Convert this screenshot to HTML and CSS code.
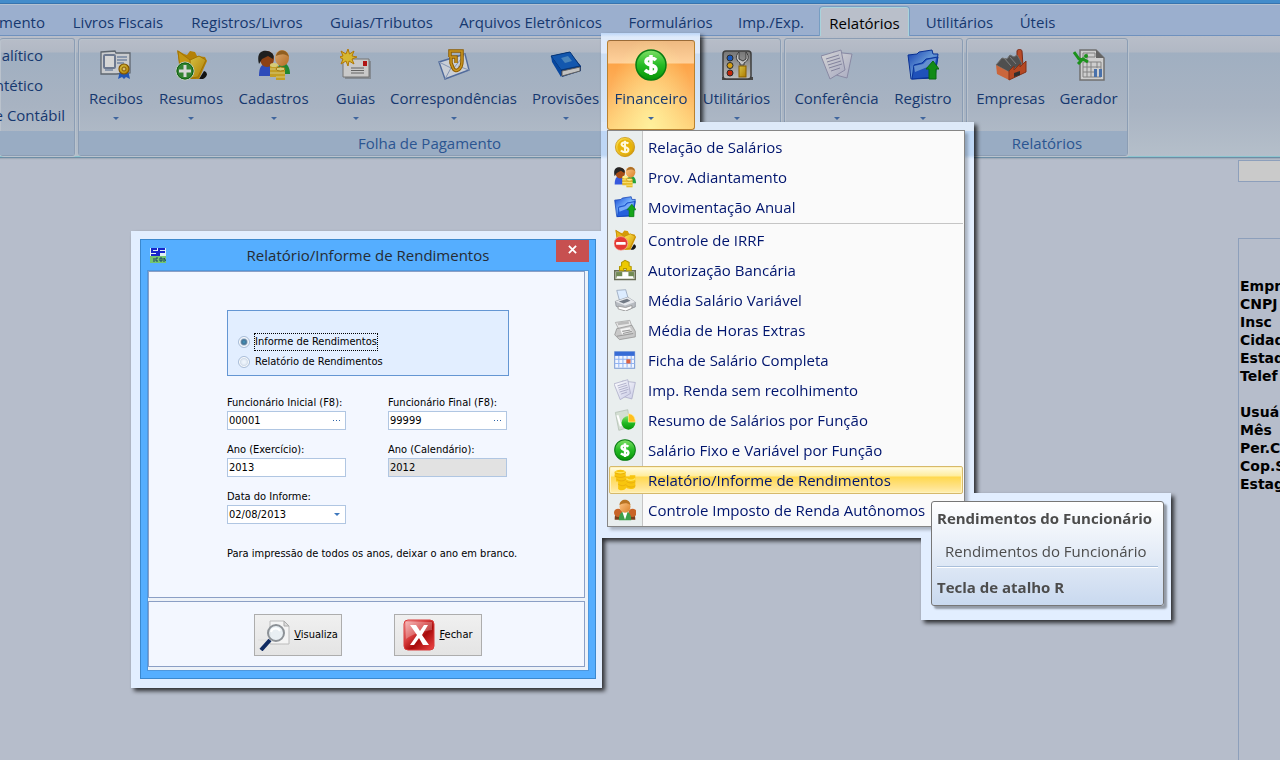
FILE: index.html
```html
<!DOCTYPE html>
<html lang="pt-BR">
<head>
<meta charset="utf-8">
<meta name="viewport" content="width=device-width, initial-scale=1">
<title>Relatório/Informe de Rendimentos</title>
<link rel="stylesheet" href="styles.css">
</head>
<body>
<svg class="sprite" aria-hidden="true">
  <defs>
    <linearGradient id="gGold" x1="0" y1="0" x2="1" y2="1"><stop offset="0" stop-color="#ffe650"/><stop offset="1" stop-color="#cf9200"/></linearGradient>
    <linearGradient id="gGreen" x1="0" y1="0" x2="0" y2="1"><stop offset="0" stop-color="#7fe066"/><stop offset=".5" stop-color="#25bb25"/><stop offset="1" stop-color="#079407"/></linearGradient>
    <linearGradient id="gBlue" x1="0" y1="0" x2="1" y2="1"><stop offset="0" stop-color="#1648d0"/><stop offset=".5" stop-color="#78b4ff"/><stop offset="1" stop-color="#0b3cb4"/></linearGradient>
    <linearGradient id="gPaper" x1="0" y1="0" x2="1" y2="1"><stop offset="0" stop-color="#ffffff"/><stop offset="1" stop-color="#c9cbe6"/></linearGradient>
    <linearGradient id="gSkin" x1="0" y1="0" x2="1" y2="1"><stop offset="0" stop-color="#ffc98a"/><stop offset="1" stop-color="#d98028"/></linearGradient>
    <linearGradient id="gRed" x1="0" y1="0" x2="1" y2="1"><stop offset="0" stop-color="#f6b0b0"/><stop offset=".4" stop-color="#d53a3a"/><stop offset=".6" stop-color="#a80c0c"/><stop offset="1" stop-color="#f04848"/></linearGradient>
    <linearGradient id="gGray" x1="0" y1="0" x2="0" y2="1"><stop offset="0" stop-color="#8b8b8b"/><stop offset="1" stop-color="#e2e2e2"/></linearGradient>
  </defs>
  <symbol id="cert" viewBox="0 0 32 32"><path d="M1 3l14-1 1 2h14v20l-14 1H1z" fill="#eff2f5" stroke="#707984" stroke-width="1.3"/><rect x="4" y="6" width="11" height="13" rx="1" fill="#fff" stroke="#8290ab" stroke-width="2"/><path d="M17 8h10M17 11h10M17 14h7M5 21h8" stroke="#8ba0c0" stroke-width="1.4"/><path d="M20 22l-2 8 4-2 2 2 2-2 4 2-2-9z" fill="#2866d8"/><circle cx="24" cy="20" r="5" fill="url(#gGold)" stroke="#9a6400" stroke-width="1.2"/><circle cx="24" cy="20" r="2" fill="#ffe58a" stroke="#a06b08"/></symbol>
  <symbol id="folderbase" viewBox="0 0 32 32"><path d="M24 30l5-8c4 1 4 6-1 8z" fill="#151515"/><path d="M2 1l7 4 3 1 3-4 5 1 2 4 8 1 2 4-8 18H7z" fill="#d69a08"/><path d="M3 2l12 9 9-3-3 21H6z" fill="#e9b417" stroke="#c08a05"/><path d="M15 11l9-4 7 4-8 17-7 1z" fill="url(#gGold)" stroke="#c08a05"/></symbol>
  <symbol id="resumos" viewBox="0 0 32 32"><use href="#folderbase"/><circle cx="10" cy="22" r="9" fill="#3d9c3a" stroke="#e5f2e2"/><circle cx="10" cy="22" r="8" fill="none" stroke="#137619"/><path d="M10 16v12M4 22h12" stroke="#fff" stroke-width="3"/></symbol>
  <symbol id="controle" viewBox="0 0 32 32"><use href="#folderbase"/><circle cx="10" cy="21" r="10" fill="#e43a35" stroke="#f6aaa0"/><rect x="3" y="19" width="14" height="4" rx="1" fill="#fff"/></symbol>
  <symbol id="people" viewBox="0 0 32 32"><path d="M1 27c0-8 2-12 7-12s8 4 8 12z" fill="#3659dd"/><path d="M19 25c0-8 3-11 6-11s7 3 7 11z" fill="#25a13a"/><ellipse cx="9" cy="10" rx="7" ry="8" fill="#a74d18"/><path d="M1 15C-2 4 4 1 9 2s8 4 6 8l-5-3-6 3z" fill="#252525"/><ellipse cx="24" cy="9" rx="7" ry="8" fill="url(#gSkin)"/><path d="M18 7c1-7 11-8 13 1-4-4-8-3-13-1z" fill="#ac7027"/><path d="M12 16h8v12h-8z" fill="#e7bc2c"/><path d="M12 20h8M12 24h8" stroke="#fff091"/><ellipse cx="16" cy="16" rx="4" ry="2" fill="#fff18d"/><path d="M18 20h9v11h-9z" fill="#e7bc2c"/><path d="M18 24h9M18 28h9" stroke="#fff091"/><ellipse cx="22.500" cy="20" rx="4.500" ry="2" fill="#fff18d" stroke="#bd8d12"/></symbol>
  <symbol id="guias" viewBox="0 0 32 32"><path d="M5 12h26v18H5z" fill="#777" opacity=".5"/><path d="M3 10h26v18H3z" fill="#efefef" stroke="#8a8a8a"/><path d="M11 19h13M11 21.500h13M11 24h13" stroke="#777"/><path d="M23 12h4v5h-4z" fill="#d11818"/><path d="M8 0l1.500 5L14 2l-2 5 5 1-5 2 2 5-5-3-1 5-2-5-5 3 2-5-4-2 4-1-2-5 5 3z" fill="#ffda3a" stroke="#d38e05"/></symbol>
  <symbol id="corr" viewBox="0 0 32 32"><path d="M1 13L27 5l4 16L7 30z" fill="#f1f6ff" stroke="#607fb9" stroke-width="1.400"/><path d="M1 13l14 7L27 5M7 30l6-11M31 21l-11-4" fill="none" stroke="#9bb1d6"/><path d="M12 8V2h12v10c0 9-7 12-9 7l-2-5V8h5v6" fill="none" stroke="#a86d00" stroke-width="3.500"/><path d="M12 8V2h12v10c0 9-7 12-9 7l-2-5V8h5v6" fill="none" stroke="#efb226" stroke-width="1.500"/></symbol>
  <symbol id="book" viewBox="0 0 32 32"><path d="M1 7L19 3l12 14v5L12 28z" fill="#063990"/><path d="M12 27l18-5v-4l-18 4z" fill="#e7e7e7" stroke="#737373"/><path d="M1 7L20 3l10 14-19 4z" fill="#1767cf" stroke="#08408c"/><path d="M11 9l7-2 4 5-7 2z" fill="#579ddf"/><path d="M1 7l10 14v7L2 13z" fill="#0a55bd"/></symbol>
  <symbol id="dollar" viewBox="0 0 32 32"><circle cx="16" cy="16" r="15" fill="url(#gGreen)" stroke="#087d12" stroke-width="1.500"/><path d="M21 11c-2-2-9-3-10 1-1 5 10 3 10 8s-8 4-11 1M16 6v20" fill="none" stroke="#fff" stroke-width="3.500"/></symbol>
  <symbol id="coin" viewBox="0 0 32 32"><circle cx="16" cy="16" r="14" fill="url(#gGold)" stroke="#c88e00"/><circle cx="16" cy="16" r="11" fill="#e8b408"/><path d="M21 11c-2-2-9-3-10 1s10 3 10 8-8 4-11 1M16 7v18" fill="none" stroke="#fff8da" stroke-width="3"/></symbol>
  <symbol id="tools" viewBox="0 0 32 32"><rect x="1" y="28" width="31" height="3" fill="#555"/><rect x="2" y="2" width="28" height="28" rx="3" fill="url(#gGray)" stroke="#4a4a4a" stroke-width="1.500"/><circle cx="9" cy="9" r="3" fill="#1d69e0" stroke="#333"/><circle cx="9" cy="16.500" r="3" fill="#ffbc12" stroke="#333"/><circle cx="9" cy="24" r="3" fill="#e62d0c" stroke="#333"/><path d="M18 3c-5 5-2 9 1 11v2h4v-2c4-2 6-6 2-11v7l-3 2-4-2z" fill="#e7e7e7" stroke="#484848"/><rect x="18" y="17" width="7" height="11" fill="url(#gGold)" stroke="#a06f00"/></symbol>
  <symbol id="papers" viewBox="0 0 32 32"><path d="M12 3l19 2-5 24-18-5z" fill="url(#gPaper)" stroke="#a3a3c2"/><path d="M0 7L20 1l4 20-15 9z" fill="url(#gPaper)" stroke="#a3a3c2"/><path d="M5 10l13-4M6 13l13-4M7 16l13-4M8 19l13-4M10 22l9-3" stroke="#9b9bba"/></symbol>
  <symbol id="bluefolder" viewBox="0 0 32 32"><path d="M1 6l9-1 2-2 13-2 1 4h5l-3 24-24 1z" fill="url(#gBlue)" stroke="#0a39ae"/><path d="M7 16l8-2 4-4 12-2-4 20-22 2z" fill="#2560dd" stroke="#0c3eb7"/><path d="M7 17l9-2 4-4 9-2-1 6-20 8z" fill="#91c3ff" opacity=".75"/><path d="M26 12l6 8h-3v10h-7V20h-3z" fill="#15a51a" stroke="#0b7d10"/></symbol>
  <symbol id="factory" viewBox="0 0 32 32"><path d="M22 2c0-2 5-2 5 0l1 15h-6z" fill="#dc5930" stroke="#8e321a"/><path d="M1 16l6-7 5 1 3-4 4 2 3-2 3 5 2 4-13 8z" fill="#5e5e5e" stroke="#808080"/><path d="M9 9l7 8M15 8l6 7" stroke="#9a9a9a"/><path d="M1 16l13 7v8L2 25z" fill="#f07a48"/><path d="M14 22l5-5v4l6-6v3l6-6v11l-17 8z" fill="#d85628" stroke="#9d3b1c"/><path d="M19 24l6-2v4l-6 2z" fill="#393939"/></symbol>
  <symbol id="sheet" viewBox="0 0 32 32"><path d="M7 1h16l8 8v22H7z" fill="#f5f5f5" stroke="#858585" stroke-width="1.500"/><path d="M23 1v8h8z" fill="#777"/><path d="M10 4h12v4H10zM10 13h18v15H10zM10 18h18M10 23h11M14 4v24M18 13v15M24 13v6" fill="none" stroke="#9b9b9b"/><path d="M21 20h3v8h-3zM26 20h3v8h-3z" fill="#5786cc"/><path d="M1 3l5 7 4 1M5 15l5-5 5 3" fill="none" stroke="#20ae20" stroke-width="3"/><circle cx="13" cy="7" r="2" fill="#20ae20"/></symbol>
  <symbol id="bank" viewBox="0 0 32 32"><path d="M1 17h30v13H1z" fill="#cbd0bd" stroke="#686d57" stroke-width="2"/><path d="M3 19h26v8H3z" fill="#708a54"/><path d="M4 25h24v3H4z" fill="#fff"/><path d="M12 19h9v7h-9z" fill="#fff"/><path d="M8 17v-6l3-1V5l5-3 6 3v5l3 1v6h-7v-3h-4v3z" fill="#edc900" stroke="#b29800" stroke-width="1.500"/></symbol>
  <symbol id="printer" viewBox="0 0 32 32"><path d="M4 2l13-1 4 14-13 2z" fill="#dcecff" stroke="#8797b1"/><path d="M2 18l18-6 11 7v7l-15 6L3 25z" fill="#b8bcc2" stroke="#848990"/><path d="M2 18l18-6 11 7-15 5z" fill="#e7e9ed"/><path d="M7 18l12-4 5 3-10 4z" fill="#737b86"/><path d="M6 25l11 2 9-3v4l-9 4-11-3z" fill="#fff" stroke="#888"/></symbol>
  <symbol id="register" viewBox="0 0 32 32"><path d="M2 5l21-3 3 9-19 4z" fill="#e8e8e8" stroke="#999"/><path d="M5 5l16-2 1 4-16 2z" fill="#bbb"/><path d="M4 14l22-5 5 9v8l-23 4-7-7z" fill="#c8c8c8" stroke="#8b8b8b"/><path d="M9 15l14-3 4 7-15 4z" fill="#f4f4f4"/><path d="M12 18l12-2M13 21l13-3M4 25l24-4" stroke="#999" stroke-width="1.500"/></symbol>
  <symbol id="calendar" viewBox="0 0 32 32"><rect x="1" y="4" width="29" height="24" fill="#f1f5ff" stroke="#7b9bd5" stroke-width="1.500"/><rect x="1" y="4" width="29" height="6" fill="#376cd6"/><path d="M7 10v17M13 10v17M19 10v17M25 10v17M1 15h29M1 21h29" stroke="#91b4f3" stroke-width="1.500"/><rect x="18" y="15" width="6" height="6" fill="#df6342"/></symbol>
  <symbol id="pie" viewBox="0 0 32 32"><path d="M2 5l18-4 4 25-17 5z" fill="#d4dfd3" stroke="#aebbad"/><path d="M5 9l5 16" stroke="#fff" stroke-width="3"/><circle cx="21" cy="20" r="10" fill="url(#gGreen)"/><path d="M21 19V7c7 0 10 6 10 12z" fill="#ffbf1f" stroke="#fff2a0"/></symbol>
  <symbol id="coins" viewBox="0 0 32 32"><path d="M1 4c3-4 14-4 16 0v7h6v-2h8v17c-2 4-11 4-13 1-1 4-9 5-12 2V18H3V12H1z" fill="#f8c50e"/><path d="M1 5c4 3 12 3 16 0M1 10c4 3 12 3 16 0M4 15c4 3 10 3 13 0M6 22c4 3 9 3 12 0M18 18c4 3 10 3 13 0M18 24c4 3 10 3 13 0" fill="none" stroke="#e2a50c"/><path d="M2 4c4 2 11 2 14 0M18 14c4 3 9 3 13 0" fill="none" stroke="#ffe557" stroke-width="2"/></symbol>
  <symbol id="team" viewBox="0 0 32 32"><path d="M1 30c0-8 2-12 7-12v12zM31 30c0-8-2-12-7-12v12z" fill="#7b3f1c"/><circle cx="6" cy="20" r="6" fill="#c86427"/><circle cx="27" cy="20" r="6" fill="#c86427"/><path d="M7 31c0-9 3-13 9-13s9 4 9 13z" fill="#3d9f4a"/><path d="M12 18h8l-4 12z" fill="#fff"/><ellipse cx="16" cy="11" rx="8" ry="9" fill="url(#gSkin)"/><path d="M8 9c0-10 15-11 16 0-5-4-11-3-16 0z" fill="#b87424"/></symbol>
</svg>

<div class="app">
  <div class="titlestrip"></div>
  <nav class="tabs" aria-label="Menu principal">
    <a class="tab tab-cut" href="#">mento</a>
    <a class="tab" href="#">Livros Fiscais</a>
    <a class="tab" href="#">Registros/Livros</a>
    <a class="tab" href="#">Guias/Tributos</a>
    <a class="tab" href="#">Arquivos Eletrônicos</a>
    <a class="tab" href="#">Formulários</a>
    <a class="tab" href="#">Imp./Exp.</a>
    <a class="tab tab-active" href="#" aria-current="page">Relatórios</a>
    <a class="tab" href="#">Utilitários</a>
    <a class="tab" href="#">Úteis</a>
  </nav>

  <div class="ribbon">
    <section class="group group-left">
      <div class="group-list">
        <button class="textbtn textbtn-in">alítico</button>
        <button class="textbtn textbtn-in">ntético</button>
        <button class="textbtn">e Contábil</button>
      </div>
      <div class="group-label"></div>
    </section>
    <section class="group">
      <div class="group-body body-folha">
        <button class="big"><svg><use href="#cert"/></svg><span>Recibos</span><i class="caret"></i></button>
        <button class="big"><svg><use href="#resumos"/></svg><span>Resumos</span><i class="caret"></i></button>
        <button class="big"><svg><use href="#people"/></svg><span>Cadastros</span><i class="caret"></i></button>
        <button class="big big-guias"><svg><use href="#guias"/></svg><span>Guias</span><i class="caret"></i></button>
        <button class="big"><svg><use href="#corr"/></svg><span>Correspondências</span><i class="caret"></i></button>
        <button class="big"><svg><use href="#book"/></svg><span>Provisões</span><i class="caret"></i></button>
        <button class="big big-open" aria-expanded="true"><svg><use href="#dollar"/></svg><span>Financeiro</span><i class="caret"></i></button>
        <button class="big"><svg><use href="#tools"/></svg><span>Utilitários</span><i class="caret"></i></button>
      </div>
      <div class="group-label">Folha de Pagamento</div>
    </section>
    <section class="group">
      <div class="group-body body-conf">
        <button class="big"><svg><use href="#papers"/></svg><span>Conferência</span><i class="caret"></i></button>
        <button class="big"><svg><use href="#bluefolder"/></svg><span>Registro</span><i class="caret"></i></button>
      </div>
      <div class="group-label"></div>
    </section>
    <section class="group">
      <div class="group-body body-rel">
        <button class="big"><svg><use href="#factory"/></svg><span>Empresas</span></button>
        <button class="big"><svg><use href="#sheet"/></svg><span>Gerador</span></button>
      </div>
      <div class="group-label">Relatórios</div>
    </section>
  </div>

  <main class="workspace">
    <aside class="side">
      <input class="side-input" type="text" aria-label="Busca">
      <div class="side-box">
        <p>Empr</p><p>CNPJ</p><p>Insc</p><p>Cidad</p><p>Estad</p><p>Telef</p>
        <p class="side-gap">Usuá</p><p>Mês</p><p>Per.C</p><p>Cop.S</p><p>Estag</p>
      </div>
    </aside>
  </main>
</div>

<div class="overlays">
  <div class="halo halo-button"></div>
  <div class="halo halo-dialog">
    <section class="window" role="dialog" aria-labelledby="dlg-title">
      <header class="window-head">
        <svg class="window-logo" viewBox="0 0 16 16" aria-hidden="true"><rect y="1" width="16" height="15" fill="#dff0f4"/><rect y="9" width="16" height="7" fill="#74c66c"/><path d="M7 2H2v3h5v3H1M15 2H9v7M9 5h6" fill="none" stroke="#1726c9" stroke-width="2"/><path d="M4 11v4M8 11H6v3h2M10 11h2v3h-2zM14 15v-4l2 3" fill="none" stroke="#18406a"/></svg>
        <h1 id="dlg-title">Relatório/Informe de Rendimentos</h1>
        <button class="close" aria-label="Fechar janela"><svg viewBox="0 0 10 10"><path d="M1 1l8 8M9 1l-8 8" stroke="#fff" stroke-width="2"/></svg></button>
      </header>
      <div class="window-body">
        <form class="pane pane-form">
          <fieldset class="choices">
            <label><input type="radio" name="tipo" checked><span class="focused">Informe de Rendimentos</span></label>
            <label><input type="radio" name="tipo"><span>Relatório de Rendimentos</span></label>
          </fieldset>
          <div class="fields">
            <div class="field"><label for="f1">Funcionário Inicial (F8):</label><div class="box"><input id="f1" type="text" value="00001"><button type="button" class="dots" aria-label="Procurar funcionário inicial"><i></i><i></i><i></i></button></div></div>
            <div class="field"><label for="f2">Funcionário Final (F8):</label><div class="box"><input id="f2" type="text" value="99999"><button type="button" class="dots" aria-label="Procurar funcionário final"><i></i><i></i><i></i></button></div></div>
            <div class="field"><label for="f3">Ano (Exercício):</label><div class="box"><input id="f3" type="text" value="2013"></div></div>
            <div class="field"><label for="f4">Ano (Calendário):</label><div class="box box-off"><input id="f4" type="text" value="2012" readonly></div></div>
            <div class="field"><label for="f5">Data do Informe:</label><div class="box"><select id="f5"><option>02/08/2013</option></select><i class="caret"></i></div></div>
          </div>
          <p class="note">Para impressão de todos os anos, deixar o ano em branco.</p>
        </form>
        <div class="pane pane-actions">
          <button class="action"><svg viewBox="0 0 32 32"><path d="M12 2h14l5 5v18H12z" fill="#f4f4f4" stroke="#bcbcbc"/><path d="M26 2v5h5z" fill="#ddd" stroke="#aaa"/><path d="M0 21h12" stroke="#ddd"/><path d="M12 21L3 31" stroke="#102c63" stroke-width="4"/><circle cx="18" cy="14" r="8" fill="#e6edf2" fill-opacity=".8" stroke="#8c9196" stroke-width="2"/><path d="M13 13c1-4 7-5 9-1" fill="none" stroke="#fff" stroke-width="2"/></svg><span><u>V</u>isualiza</span></button>
          <button class="action"><svg viewBox="0 0 32 32"><rect x="1" y="1" width="30" height="30" rx="4" fill="url(#gRed)" stroke="#d83b3b"/><path d="M3 3h26v8C20 12 9 15 3 20z" fill="#fff" opacity=".25"/><path d="M7 6h6l4 6 4-6h4l-6 10 7 10h-6l-4-7-5 7H7l7-10z" fill="#fff"/></svg><span><u>F</u>echar</span></button>
        </div>
      </div>
    </section>
  </div>
  <div class="halo halo-tip"></div>
  <div class="halo halo-menu">
    <ul class="menu" role="menu">
      <li><button class="item" role="menuitem"><svg><use href="#coin"/></svg>Relação de Salários</button></li>
      <li><button class="item" role="menuitem"><svg><use href="#people"/></svg>Prov. Adiantamento</button></li>
      <li><button class="item" role="menuitem"><svg><use href="#bluefolder"/></svg>Movimentação Anual</button></li>
      <li class="sep" role="separator"></li>
      <li><button class="item" role="menuitem"><svg><use href="#controle"/></svg>Controle de IRRF</button></li>
      <li><button class="item" role="menuitem"><svg><use href="#bank"/></svg>Autorização Bancária</button></li>
      <li><button class="item" role="menuitem"><svg><use href="#printer"/></svg>Média Salário Variável</button></li>
      <li><button class="item" role="menuitem"><svg><use href="#register"/></svg>Média de Horas Extras</button></li>
      <li><button class="item" role="menuitem"><svg><use href="#calendar"/></svg>Ficha de Salário Completa</button></li>
      <li><button class="item" role="menuitem"><svg><use href="#papers"/></svg>Imp. Renda sem recolhimento</button></li>
      <li><button class="item" role="menuitem"><svg><use href="#pie"/></svg>Resumo de Salários por Função</button></li>
      <li><button class="item" role="menuitem"><svg><use href="#dollar"/></svg>Salário Fixo e Variável por Função</button></li>
      <li><button class="item item-hot" role="menuitem"><svg><use href="#coins"/></svg>Relatório/Informe de Rendimentos</button></li>
      <li><button class="item" role="menuitem"><svg><use href="#team"/></svg>Controle Imposto de Renda Autônomos</button></li>
    </ul>
  </div>
  <div class="tip" role="tooltip">
    <strong>Rendimentos do Funcionário</strong>
    <p>Rendimentos do Funcionário</p>
    <strong class="tip-foot">Tecla de atalho R</strong>
  </div>
</div>
</body>
</html>
```
FILE: styles.css
```css
* { box-sizing: border-box; }

body {
  margin: 0;
  background: #b6bdcb;
  font-family: "Open Sans", "Noto Sans", sans-serif;
  font-size: 15px;
  line-height: 20px;
  color: #16386f;
  overflow: hidden;
}

button, input, select { font: inherit; color: inherit; }
button { border: 0; background: none; padding: 0; }
p, h1, ul { margin: 0; padding: 0; }
ul { list-style: none; }

.sprite { position: absolute; width: 0; height: 0; }
.app { display: flex; flex-direction: column; min-height: 100vh; }

/* Tabs */
.titlestrip { height: 5px; background: #438ccb; border-bottom: 1px solid #b5c2d2; box-shadow: inset 0 -1px #3874ae; }
.tabs {
  display: grid;
  grid-template-columns: 59px 118px 140px 129px 169px 111px 90px 97px 93px 63px;
  height: 31px;
  background: #9bafce;
  border-bottom: 1px solid #6f91be;
}
.tab { display: flex; align-items: center; justify-content: center; color: #16386f; text-decoration: none; white-space: nowrap; padding-top: 4px; }
.tab-cut { justify-content: flex-end; padding-right: 14px; }
.tab-active {
  margin: 1px 3px -1px;
  padding-top: 3px;
  color: #000;
  background: #b9bfca;
  border: 1px solid #779dc2;
  border-bottom: 0;
  border-radius: 4px 4px 0 0;
  box-shadow: inset 1px 1px #a9d3dc, inset -1px 0 #a9d3dc;
}

/* Ribbon */
.ribbon {
  display: flex;
  gap: 3px;
  padding: 2px 0 1px;
  background: linear-gradient(#b8bec9 0, #b1b8c4 16px, #a0afc1 17px, #a8b3c2 70px, #b5bfca 100%);
  border-bottom: 1px solid #6d8ea6;
  box-shadow: inset 0 -1px #8dc5cf, 0 1px 1px #a1abb9;
}
.group {
  display: flex;
  flex-direction: column;
  border: 1px solid #8b9db4;
  border-radius: 3px;
  box-shadow: inset 1px 1px #bac2cc, 1px 1px #b9c3cd;
}
.group-left { width: 75px; border-left: 0; }
.group-list { display: flex; flex-direction: column; align-items: flex-end; height: 92px; padding-top: 1px; }
.textbtn { height: 30px; padding-right: 9px; white-space: nowrap; }
.textbtn-in { padding-right: 31px; }
.group-body { display: grid; height: 92px; padding: 1px 2px; }
.body-folha { grid-template-columns: 70px 80px 85px 67px 141px 83px 88px 83px; }
.body-conf { grid-template-columns: 99px 74px; }
.body-rel { grid-template-columns: 83px 73px; }
.group-label { height: 24px; line-height: 24px; text-align: center; color: #2b5591; background: #99acc3; }
.big { display: flex; flex-direction: column; align-items: center; padding-top: 9px; white-space: nowrap; }
.big svg { width: 32px; height: 32px; filter: brightness(.84); }
.big span { margin-top: 7px; }
.big-guias { padding-left: 12px; }
.big-open {
  position: relative;
  z-index: 3;
  padding-top: 8px;
  border: 1px solid #b9812f;
  border-top-color: #9a6b38;
  border-radius: 3px;
  background:
    radial-gradient(ellipse at 50% 100%, rgba(255, 244, 160, .9), rgba(255, 225, 140, 0) 75%),
    linear-gradient(#eeb981 0, #ffd19b 22px, #fda448 23px, #fdb562 60%, #ffd27a 100%);
}
.big-open svg { filter: none; }
.caret { width: 0; height: 0; margin-top: 9px; border: 3px solid transparent; border-top-color: #3f659d; border-bottom: 0; }

/* Right-hand company panel */
.workspace { flex: 1; display: flex; justify-content: flex-end; padding-top: 2px; }
.side { display: flex; flex-direction: column; width: 42px; }
.side-input { width: 100%; height: 22px; border: 1px solid #8d9fbb; border-right: 0; background: #cacaca; }
.side-box { flex: 1; margin-top: 56px; padding: 38px 0 0 1px; border: 1px solid #8d9fbb; border-width: 1px 0 0 1px; font: bold 14px/18px "DejaVu Sans", sans-serif; color: #000; white-space: nowrap; }
.side-gap { margin-top: 18px; }

/* Lit panels floating over the dimmed page */
.overlays { position: absolute; inset: 0; z-index: 2; pointer-events: none; filter: drop-shadow(3px 3px 2px rgba(0, 0, 0, .75)); }
.halo { position: absolute; background: #e2eeff; pointer-events: auto; }
.halo-button { left: 601px; top: 33px; width: 99px; height: 100px; background: linear-gradient(#bdd6f8 0, #dfeafa 4px, #e0eafa 20px, #cbddf3 21px, #dce9f8 100%); }
.halo-dialog { left: 131px; top: 231px; padding: 8px 6px 9px 9px; }
.halo-menu { left: 601px; top: 122px; padding: 8px 9px 11px 6px; background: linear-gradient(#dde9f8 9px, #bed7f5 9px, #bed7f5 33px, #e2eeff 37px); }
.halo-tip { left: 921px; top: 493px; width: 250px; height: 127px; }

/* Dialog */
.window { width: 456px; padding: 0 6px 7px; border: 1px solid #3b88ce; background: #55aeff; color: #000; font: 11px/16px "DejaVu Sans Condensed", "DejaVu Sans", sans-serif; }
.window-head { display: flex; height: 30px; align-items: center; }
.window-logo { width: 16px; height: 16px; margin-left: 3px; }
.window-head h1 { flex: 1; padding-left: 14px; text-align: center; font: 15px/20px "Open Sans", sans-serif; color: #262c34; }
.close { align-self: flex-start; width: 33px; height: 22px; background: #c75050; }
.close svg { width: 9px; height: 9px; }
.window-body { display: flex; flex-direction: column; gap: 3px; padding: 0 3px 3px 0; background: #edf2f8; border: 1px solid #4f97dd; }
.pane { background: #f3f7ff; border: 1px solid #8b9fc5; }
.pane-form { padding: 38px 75px 35px 78px; }
.choices { display: flex; flex-direction: column; gap: 4px; height: 66px; margin: 0; padding: 23px 0 0 10px; border: 1px solid #6496d3; background: #e2eeff; }
.choices label { display: flex; align-items: center; gap: 5px; height: 16px; }
.choices input { appearance: none; width: 12px; height: 12px; margin: 0; border: 1px solid #a9bdd8; border-radius: 50%; background: #eef4fb; box-shadow: inset 0 0 0 1px #fff, inset 0 0 2px 2px #cbd7e6; }
.choices input:checked { background: radial-gradient(circle, #4d9fc4 0, #17486e 3px, #edf4fa 4px); }
.focused { outline: 1px dotted #000; }
.fields { display: grid; grid-template-columns: 119px 119px; gap: 12px 42px; margin-top: 19px; }
.field { display: flex; flex-direction: column; white-space: nowrap; }
.box { display: flex; align-items: center; height: 19px; border: 1px solid #b0c6e2; background: #fff; }
.box-off { background: #e2e2e2; }
.box input, .box select { flex: 1; min-width: 0; height: 17px; padding: 0 1px; border: 0; background: none; appearance: none; line-height: 16px; outline: 0; }
.box .caret { margin: 0 5px 0 0; border-top-color: #3e78bd; }
.dots { display: flex; gap: 2px; padding-right: 5px; }
.dots i { width: 1px; height: 1px; background: #2f65a8; }
.note { margin-top: 22px; white-space: nowrap; }
.pane-actions { display: flex; justify-content: center; gap: 52px; padding: 12px 0 10px 3px; }
.action { display: flex; align-items: center; justify-content: center; gap: 4px; width: 88px; height: 42px; border: 1px solid #adadad; background: linear-gradient(#f0f0f0, #e4e4e4); }
.action svg { width: 32px; height: 32px; }

/* Financeiro menu */
.menu { width: 358px; padding: 1px; border: 1px solid #868686; background: linear-gradient(90deg, #e9eeee 34px, #c5c5c5 34px, #c5c5c5 35px, #fafafa 35px); box-shadow: 3px 3px 3px rgba(0, 0, 0, .25); }
.menu li { display: flex; }
.item { display: flex; align-items: center; gap: 12px; width: 100%; height: 28px; margin: 1px 0; padding-left: 4px; border: 1px solid transparent; border-radius: 2px; color: #00156e; text-align: left; white-space: nowrap; }
.item svg { width: 22px; height: 22px; }
.item-hot { border-color: #d6b96b; background: linear-gradient(#fffbe6 0, #ffed9c 9px, #ffd84e 10px, #ffe38b 20px, #ffefb0 100%); box-shadow: inset 0 0 0 1px #fff3bd; }
.sep { height: 1px; margin: 1px 0 1px 39px; background: #c5c5c5; }

/* Tooltip */
.tip { position: absolute; left: 931px; top: 501px; width: 233px; padding: 6px 5px 8px; border: 1px solid #767676; border-radius: 3px; background: linear-gradient(#fff, #c9d9ef); box-shadow: 3px 3px 2px rgba(0, 0, 0, .35); color: #4c4c4c; white-space: nowrap; }
.tip strong { display: block; }
.tip p { padding: 13px 0 5px 8px; border-bottom: 1px solid #a9bfda; box-shadow: 0 1px #fff; }
.tip-foot { margin-top: 10px; }
```
